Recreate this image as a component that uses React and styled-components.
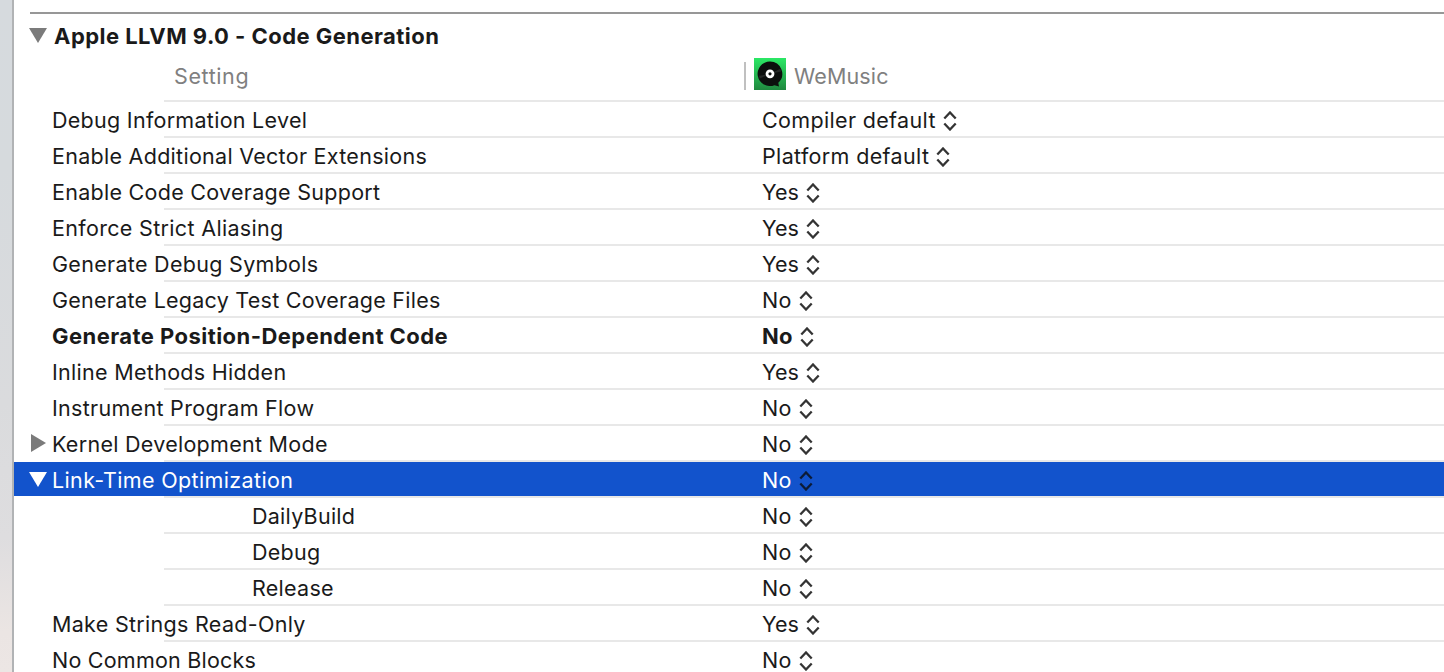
import React from "react";
import styled, { createGlobalStyle } from "styled-components";

const Global = createGlobalStyle`
  * { box-sizing: border-box; }
  body { margin: 0; background: #fff; overflow: hidden; }
`;

const Window = styled.div`
  display: flex;
  height: 672px;
  overflow: hidden;
  background: #fff;
  color: #1a1a1a;
  font: 440 21.5px/34px Inter, "Noto Sans", sans-serif;
  white-space: nowrap;
`;

const Sidebar = styled.div`
  flex: none;
  width: 14px;
  border-right: 2px solid #b1b3b5;
  background: linear-gradient(#d6dade 0%, #d6dadd 25%, #dadbdd 60%, #dedddf 80%, #ebe5e3 94%, #ece6e4 100%);
`;

const Panel = styled.main`
  flex: 1;
  min-width: 0;
  padding-top: 12px;
`;

const SectionTitle = styled.header`
  display: flex;
  height: 44px;
  margin-left: 16px;
  border-top: 2px solid #979797;
  line-height: 44px;
  font-size: 22px;
  font-weight: 700;
`;

const Columns = styled.div`
  display: flex;
  height: 46px;
  margin-left: 150px;
  border-bottom: 2px solid #e8e8e8;
  color: #808080;
`;

const SettingHeading = styled.div`
  width: 580px;
  padding: 3px 0 0 10px;
  letter-spacing: 0.6px;
`;

const TargetHeading = styled.div`
  display: flex;
  height: 36px;
  padding-top: 3px;
`;

const Divider = styled.i`
  width: 2px;
  height: 28px;
  margin: 3px 8px 0 0;
  background: #c0c0c0;
`;

const Icon = styled.svg`
  display: block;
  flex: none;
  margin: -1px 8px 0 0;
`;

const Row = styled.div`
  display: flex;
  height: 36px;
  padding-bottom: 2px;
  background:
    linear-gradient(#e8e8e8, #e8e8e8) 150px 34px / 100% 2px no-repeat,
    linear-gradient(${(p) => (p.$selected ? "#1253cc, #1253cc" : "#fff, #fff")}) 0 0 / 100% 34px no-repeat;
  color: ${(p) => (p.$selected ? "#fff" : "inherit")};
  font-size: ${(p) => (p.$bold ? "22px" : "inherit")};
  font-weight: ${(p) => (p.$bold ? 700 : "inherit")};
`;

const Name = styled.div`
  display: flex;
  width: 748px;
  padding-left: ${(p) => (p.$nested ? 238 : p.$arrow ? 15 : 38)}px;
`;

const Value = styled.div`
  display: flex;
  align-items: center;
`;

const Text = styled.span`
  display: block;
  padding-top: ${(p) => p.$drop || 0}px;
  letter-spacing: ${(p) => p.$tracking || 0}px;
`;

const Arrow = styled.svg`
  display: block;
  flex: none;
  width: 18px;
  height: 18px;
  margin: ${(p) => p.$margin || "8px 5px 0 0"};
  fill: ${(p) => p.$color || "#7b7b7b"};
`;

const Stepper = styled.svg`
  display: block;
  margin: 4px 0 0 7px;
  fill: none;
  stroke: ${(p) => (p.$selected ? "#0c1b36" : "#343434")};
  stroke-width: 2.3;
`;

function Disclosure({ open, ...rest }) {
  return (
    <Arrow viewBox="0 0 18 18" {...rest}>
      <path d={open ? "M0 2H18L9 17Z" : "M2 0V18L17 9Z"} />
    </Arrow>
  );
}

function MusicIcon() {
  return (
    <Icon width="32" height="32" viewBox="0 0 32 32">
      <defs>
        <linearGradient id="green" x2="0" y2="1">
          <stop stopColor="#2be865" />
          <stop offset="1" stopColor="#20883f" />
        </linearGradient>
      </defs>
      <path fill="url(#green)" d="M0 0H32V32H0Z" />
      <path fill="#0c0f0d" d="M16 3.5A12.3 12.3 0 1 0 20.5 27.2L25 28.5L24.3 24.8A12.3 12.3 0 0 0 16 3.5Z" />
      <path fill="#242725" d="M16 16L5.8 20.5L5 17.8ZM16 16L26.2 10.8L27 13.5Z" />
      <circle cx="16" cy="15.8" r="4.4" fill="#fff" />
      <circle cx="16" cy="15.8" r="1.6" fill="#0c0f0d" />
    </Icon>
  );
}

const settings = [
  { name: "Debug Information Level", value: "Compiler default", tracking: 0.28 },
  { name: "Enable Additional Vector Extensions", value: "Platform default", tracking: 0.28 },
  { name: "Enable Code Coverage Support", value: "Yes", tracking: 0.28 },
  { name: "Enforce Strict Aliasing", value: "Yes", tracking: 0.33 },
  { name: "Generate Debug Symbols", value: "Yes", tracking: 0.3 },
  { name: "Generate Legacy Test Coverage Files", value: "No", tracking: 0.25 },
  { name: "Generate Position-Dependent Code", value: "No", bold: true, tracking: 0.45 },
  { name: "Inline Methods Hidden", value: "Yes", tracking: 0.3 },
  { name: "Instrument Program Flow", value: "No", tracking: 0.3 },
  { name: "Kernel Development Mode", value: "No", arrow: "closed", tracking: 0.28 },
  { name: "Link-Time Optimization", value: "No", arrow: "open", selected: true, tracking: 0.36 },
  { name: "DailyBuild", value: "No", nested: true, tracking: 0.26 },
  { name: "Debug", value: "No", nested: true, tracking: 0.26 },
  { name: "Release", value: "No", nested: true, tracking: 0.26 },
  { name: "Make Strings Read-Only", value: "Yes", tracking: 0.3 },
  { name: "No Common Blocks", value: "No", tracking: 0.22 },
];

const valueTracking = {
  "Compiler default": 0.34,
  "Platform default": 0.35,
  Yes: 0,
  No: 0.3,
};

function SettingRow({ name, value, bold, arrow, selected, nested, tracking }) {
  return (
    <Row $selected={selected} $bold={bold}>
      <Name $nested={nested} $arrow={arrow}>
        {arrow && <Disclosure open={arrow === "open"} $color={selected ? "#fff" : undefined} />}
        <Text $drop={1} $tracking={tracking}>{name}</Text>
      </Name>
      <Value>
        <Text $drop={1} $tracking={valueTracking[value]}>{value}</Text>
        <Stepper width="14" height="20" viewBox="0 0 14 20" $selected={selected}>
          <path d="M1.3 7.5L7 1.5L12.7 7.5M1.3 12.5L7 18.5L12.7 12.5" />
        </Stepper>
      </Value>
    </Row>
  );
}

export default function App() {
  return (
    <>
      <Global />
      <Window>
        <Sidebar />
        <Panel>
          <SectionTitle>
            <Disclosure open $margin="12px 7px 0 -1px" />
            <Text $tracking={0.46}>Apple LLVM 9.0 - Code Generation</Text>
          </SectionTitle>
          <Columns>
            <SettingHeading>Setting</SettingHeading>
            <TargetHeading>
              <Divider />
              <MusicIcon />
              <Text $tracking={0.15}>WeMusic</Text>
            </TargetHeading>
          </Columns>
          {settings.map((s) => (
            <SettingRow key={s.name} {...s} />
          ))}
        </Panel>
      </Window>
    </>
  );
}
